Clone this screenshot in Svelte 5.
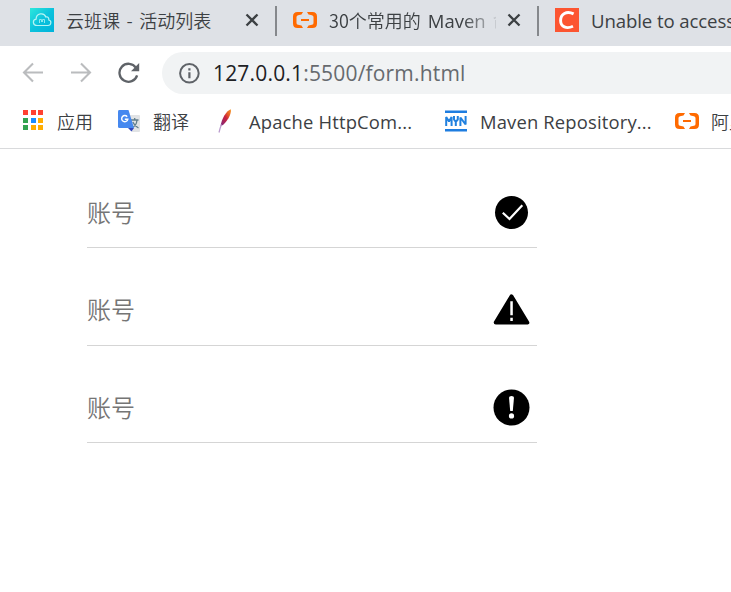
<script>
  const fields = [
    { id: 'ok', label: '账号' },
    { id: 'warn', label: '账号' },
    { id: 'error', label: '账号' }
  ];
  const dots = ['#ff4131', '#ff4131', '#ff4131', '#32a350', '#1a8cff', '#ffad00', '#32a350', '#ffad00', '#ffad00'];
</script>

{#snippet close()}
  <svg class="close" width="14" height="14" viewBox="0 0 14 14"><path d="M1.5 1.5L12.5 12.5M12.5 1.5L1.5 12.5" stroke="#3c4043" stroke-width="2.3" fill="none" /></svg>
{/snippet}

{#snippet aliyun()}
  <svg width="24" height="24" viewBox="0 0 24 24">
    <path d="M10 4H4.5Q0 4 0 8.5V15.5Q0 20 4.5 20H10L8.5 17.6L5 16.8Q3.5 16.4 3.5 15V9Q3.5 7.6 5 7.2L8.5 6.4ZM14 4H19.5Q24 4 24 8.5V15.5Q24 20 19.5 20H14L15.5 17.6L19 16.8Q20.5 16.4 20.5 15V9Q20.5 7.6 19 7.2L15.5 6.4Z" fill="#ff6a00" />
    <path d="M8 12H16" stroke="#ff6a00" stroke-width="2" />
  </svg>
{/snippet}

<div class="window">
  <div class="tabs">
    <div class="tab first">
      <svg width="24" height="24" viewBox="0 0 24 24">
        <defs><linearGradient id="sky" x2="1" y2="1"><stop stop-color="#2de8dc" /><stop offset=".5" stop-color="#0cc2dc" /><stop offset="1" stop-color="#00b3db" /></linearGradient></defs>
        <path fill="url(#sky)" d="M0 0H24V24H0z" />
        <path d="M7 17.5C2.5 17.5 2.2 11.8 6.1 11.2C6 5 14.2 4 15.8 9C17.8 8.2 19 10 18.8 12C22 12.7 21.3 17.5 18 17.5Z" fill="none" stroke="#b5f4f4" stroke-width="1.2" />
        <path d="M9.5 15V11.5H11.5V14M12.5 14V11.5H14.5V15" fill="none" stroke="#8ceaf0" />
      </svg>
      <span class="title t1">云班课 - 活动列表</span>
      {@render close()}
    </div>
    <div class="tab second">
      {@render aliyun()}
      <span class="title t2">30个常用的 <span class="latin">Maven</span> 命令</span>
      {@render close()}
    </div>
    <div class="tab third">
      <svg width="24" height="24" viewBox="0 0 24 24"><path fill="#fc5531" d="M0 0H24V24H0z" /><path d="M18.6 5.9C11.5 2.3 5.6 6.2 5.6 12.5C5.6 19 11.5 21.2 18 18.3" fill="none" stroke="#fff" stroke-width="2.9" /></svg>
      <span class="title t3">Unable to access</span>
    </div>
  </div>

  <div class="toolbar">
    <svg class="back" width="22" height="22" viewBox="0 0 22 22"><path d="M21 10.5H2M11 1.5L2 10.5L11 19.5" fill="none" stroke="#babcbe" stroke-width="2.1" /></svg>
    <svg class="forward" width="22" height="22" viewBox="0 0 22 22"><path d="M1 10.5H20M11 1.5L20 10.5L11 19.5" fill="none" stroke="#babcbe" stroke-width="2.1" /></svg>
    <svg class="reload" width="22" height="22" viewBox="0 0 22 22"><path d="M18 5.8A9 9 0 1 0 19.1 13.4" fill="none" stroke="#5f6368" stroke-width="2.3" /><path d="M21.2 1V9.2H13z" fill="#5f6368" /></svg>
    <div class="address">
      <svg width="22" height="22" viewBox="0 0 22 22"><circle cx="11.4" cy="11.3" r="9.3" fill="none" stroke="#5f6368" stroke-width="2" /><path d="M10.3 10.2H12.5V16.2H10.3zM10.3 6.3H12.5V8.4H10.3z" fill="#5f6368" /></svg>
      <span class="url"><b>127.0.0.1</b><span>:5500/form.html</span></span>
    </div>
  </div>

  <div class="bookmarks">
    <div class="mark apps">
      <div class="grid">{#each dots as color}<i style:background={color}></i>{/each}</div>
      <span>应用</span>
    </div>
    <div class="mark translate">
      <svg width="24" height="24" viewBox="0 0 24 24">
        <path d="M9 6H21Q22 6 22 7V22Q22 23 21 23H14z" fill="#e1e3e5" />
        <path d="M13 11H20.5M16.7 9V11M13.5 19Q18.5 17 19 11M14.8 13Q16.5 17 20.5 19" fill="none" stroke="#607d8b" stroke-width="1.3" />
        <path d="M10 19H16L13.5 22.5z" fill="#3447ba" />
        <path d="M1 1H10.5L16 19H1.5Q0 19 0 17.5V2.5Q0 1 1 1z" fill="#4688ef" />
        <path d="M9.2 7.7A3.1 3.1 0 1 0 9.8 10.3H6.8" fill="none" stroke="#fff" stroke-width="1.4" />
      </svg>
      <span>翻译</span>
    </div>
    <div class="mark apache">
      <svg width="14" height="24" viewBox="0 0 14 24">
        <defs><linearGradient id="quill" x1="1" y1="0" x2="0" y2="1"><stop stop-color="#f79a23" /><stop offset=".3" stop-color="#e45a28" /><stop offset=".5" stop-color="#c8203e" /><stop offset="1" stop-color="#762b84" /></linearGradient></defs>
        <path d="M12.8.2C8 2 3.8 9.5 2.5 17L5 16C8 13.5 14 5.5 12.8.2z" fill="url(#quill)" />
        <path d="M3.5 15.5Q2 19 1 23.5" fill="none" stroke="#b99acd" stroke-width="1.2" />
      </svg>
      <span>Apache HttpCom...</span>
    </div>
    <div class="mark maven">
      <svg width="22" height="22" viewBox="0 0 22 22"><path d="M0 1.8H22M0 20.2H22" stroke="#1e7de0" stroke-width="2.6" /><path d="M1.2 16V7L4 11.5L6.6 7V16M9 6V9.5L10.8 11.8L12.8 9.5V6M10.8 11V16M15.4 16V7.5L20.6 14.5V6" fill="none" stroke="#2181df" stroke-width="2" stroke-linejoin="bevel" /></svg>
      <span>Maven Repository...</span>
    </div>
    <div class="mark ali">{@render aliyun()}<span>阿里云</span></div>
  </div>

  <form class="form">
    {#each fields as field}
      <label class="field">
        <span>{field.label}</span>
        <svg width="38" height="38" viewBox="0 0 38 38">
          {#if field.id === 'ok'}
            <circle cx="18.5" cy="18.5" r="16.5" />
            <path d="M9.8 18.7L16.5 25L29.3 11.2" fill="none" stroke="#fff" stroke-width="2.2" />
          {:else if field.id === 'warn'}
            <path d="M18.5 5.5L34.2 31.5H2.8z" stroke="#000" stroke-width="4.2" stroke-linejoin="round" />
            <path d="M17.3 10.3H19.8V24.3H17.3zM17.3 26.8H19.8V30H17.3z" fill="#fff" />
          {:else}
            <circle cx="18.5" cy="18.5" r="18" />
            <path d="M16 8.5Q16 7 18.5 7Q21 7 21 8.5L19.8 22H17.2z" fill="#fff" /><circle cx="18.5" cy="26.9" r="2.6" fill="#fff" />
          {/if}
        </svg>
      </label>
    {/each}
  </form>
</div>

<style>
  .window { width: 731px; height: 592px; overflow: hidden; background: #fff; font-family: "Open Sans", "Noto Sans CJK SC", sans-serif; color: #3c4043; }
  svg { display: block; flex: none; }
  .tabs { height: 46px; box-sizing: border-box; padding-left: 30px; display: flex; background: #dee1e6; overflow: hidden; }
  .tab { display: flex; align-items: center; height: 40px; flex: none; position: relative; }
  .first { width: 263px; }
  .second { width: 262px; }
  .second::before, .third::before { content: ""; position: absolute; left: -18px; top: 6px; width: 2px; height: 30px; background: #85888c; }
  .title { margin-left: 12px; font-size: 18px; line-height: 26px; white-space: nowrap; overflow: hidden; font-weight: 350; }
  .t1 { width: 178px; font-family: "Noto Sans CJK SC", sans-serif; word-spacing: 2.5px; }
  .t2 { width: 167px; margin-right: 11px; font-family: "Noto Sans CJK SC", sans-serif; word-spacing: 3px; mask-image: linear-gradient(90deg, #000 134px, transparent 172px); }
  .latin { font-family: "Open Sans", sans-serif; font-weight: 400; font-size: 18.5px; }
  .t3 { font-size: 18.6px; font-weight: 400; letter-spacing: -.1px; margin-top: 2px; }
  .first .close { margin-left: 1px; }
  .toolbar { height: 54px; display: flex; align-items: center; padding-left: 22px; }
  .forward { margin-left: 26px; }
  .reload { margin-left: 26px; }
  .address { height: 42px; flex: 1; margin-left: 22px; border-radius: 21px 0 0 21px; background: #f1f3f4; display: flex; align-items: center; padding-left: 16px; }
  .url { margin-left: 13px; font-size: 21px; line-height: 30px; letter-spacing: .18px; color: #666a6e; white-space: nowrap; }
  .url b { font-weight: 400; color: #202124; }
  .bookmarks { height: 41px; border-bottom: 1px solid #d9dadc; display: flex; align-items: center; padding: 0 0 7px 23px; }
  .mark { display: flex; align-items: center; flex: none; white-space: nowrap; font-size: 18.4px; line-height: 26px; letter-spacing: .17px; }
  .mark > span { font-weight: 400; margin-top: 3px; }
  .apps { width: 95px; }
  .grid { width: 20px; display: grid; grid-template-columns: repeat(3, 5px); gap: 2.5px; margin-right: 14px; padding-bottom: 1px; }
  .grid i { width: 5px; height: 5px; }
  .translate { width: 100px; }
  .translate > span { margin-left: 11px; }
  .apps > span, .translate > span, .ali > span { font-family: "Noto Sans CJK SC", sans-serif; font-weight: 350; font-size: 18px; letter-spacing: 0; margin-top: 1px; }
  .apache { width: 227px; }
  .apache > span { margin-left: 17px; }
  .maven { width: 230px; }
  .maven > span { margin-left: 13px; }
  .ali > span { margin-left: 12px; }
  .form { width: 450px; margin: 0 0 0 87px; padding-top: 1.5px; }
  .field { display: flex; align-items: center; justify-content: space-between; height: 97.5px; box-sizing: border-box; padding: 28px 6.5px 0 0; border-bottom: 1px solid #d5d5d5; font-size: 24px; color: #757575; font-weight: 350; }
  .field > span { margin-top: -3px; }
</style>
